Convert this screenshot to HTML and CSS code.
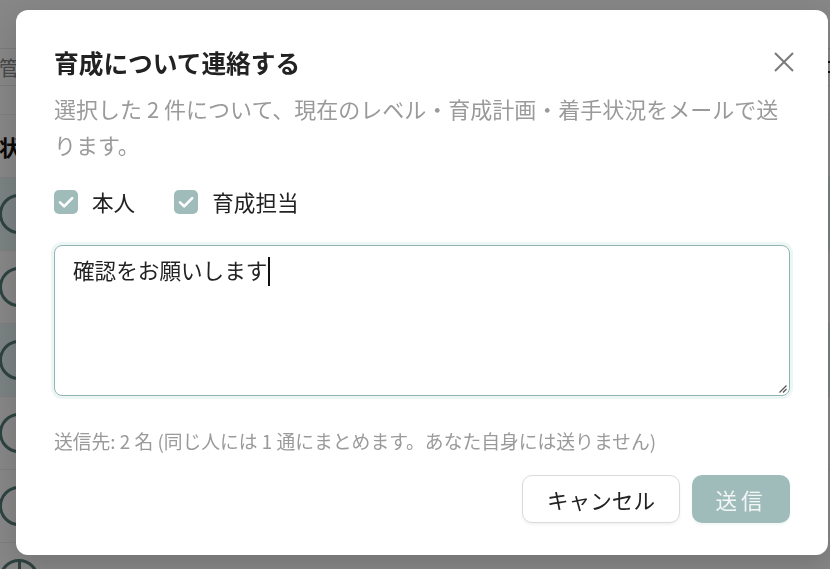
FILE: index.html
```html
<!DOCTYPE html>
<html lang="ja">
<head>
<meta charset="utf-8">
<title>育成について連絡する</title>
<link rel="stylesheet" href="styles.css">
</head>
<body>
<div class="page">
  <div class="toolbar">
    <span class="tool-text">管理</span>
    <span class="tool-right"></span>
  </div>
  <div class="thead"><span class="th">状態</span></div>
  <div class="row selected"><span class="circle"></span><span class="badge"></span></div>
  <div class="row"><span class="circle"></span><span class="badge"></span></div>
  <div class="row selected"><span class="circle"></span><span class="badge"></span></div>
  <div class="row"><span class="circle"></span><span class="badge"></span></div>
  <div class="row"><span class="circle"></span><span class="badge"></span></div>
  <div class="row"><span class="circle pie"></span><span class="badge"></span></div>
</div>

<div class="overlay"></div>

<div class="modal" role="dialog" aria-labelledby="dlg-title">
  <div class="modal-head">
    <h2 id="dlg-title" class="modal-title">育成について連絡する</h2>
    <button class="close" aria-label="閉じる">
      <svg width="20" height="20" viewBox="0 0 20 20"><path d="M1 1L19 19M19 1L1 19" stroke="#7a7a7a" stroke-width="2" fill="none"/></svg>
    </button>
  </div>
  <p class="desc">選択した 2 件について、現在のレベル・育成計画・着手状況をメールで送ります。</p>
  <div class="checks">
    <label class="check">
      <span class="box"><svg width="24" height="24" viewBox="0 0 24 24"><path d="M6 12.4L10.1 16.3L18.2 8.2" stroke="#fff" stroke-width="2.6" fill="none" stroke-linecap="round" stroke-linejoin="round"/></svg></span>
      <span class="check-label">本人</span>
    </label>
    <label class="check">
      <span class="box"><svg width="24" height="24" viewBox="0 0 24 24"><path d="M6 12.4L10.1 16.3L18.2 8.2" stroke="#fff" stroke-width="2.6" fill="none" stroke-linecap="round" stroke-linejoin="round"/></svg></span>
      <span class="check-label">育成担当</span>
    </label>
  </div>
  <div class="textarea" role="textbox" aria-multiline="true">確認をお願いします<span class="caret"></span>
    <svg class="grip" width="10" height="10" viewBox="0 0 10 10"><path d="M9.5 2.5L2.5 9.5M9.5 6L6 9.5" stroke="#555" stroke-width="1.2" fill="none"/></svg>
  </div>
  <p class="note">送信先: 2 名 (同じ人には 1 通にまとめます。あなた自身には送りません)</p>
  <div class="actions">
    <button class="btn cancel">キャンセル</button>
    <button class="btn send" disabled>送信</button>
  </div>
</div>
</body>
</html>
```

FILE: styles.css
```css
html, body {
  margin: 0;
  padding: 0;
  width: 830px;
  height: 569px;
  overflow: hidden;
  background: #ffffff;
  font-family: "Noto Sans CJK JP", "Noto Sans", sans-serif;
}

/* background page */
.page {
  position: relative;
  height: 569px;
  overflow: hidden;
}
.toolbar {
  margin-top: 48px;
  height: 36px;
  border-top: 1px solid #e6e6e6;
  border-bottom: 1px solid #e6e6e6;
  display: flex;
  align-items: center;
  justify-content: space-between;
  font-size: 20px;
  color: #888;
}
.tool-text {
  margin-left: -1px;
}
.tool-right {
  width: 8px;
  height: 12px;
  margin-right: -4px;
  border-top: 2px solid #222;
  border-bottom: 2px solid #222;
  box-sizing: border-box;
}
.thead {
  margin-top: 28px;
  height: 62px;
  border-top: 1px solid #f0f0f0;
  border-bottom: 1px solid #eeeeee;
  display: flex;
  align-items: center;
}
.th {
  font-size: 22px;
  font-weight: 700;
  color: #111;
  margin-left: -1px;
}
.row {
  height: 72px;
  border-bottom: 1px solid #eeeeee;
  display: flex;
  align-items: center;
}
.row.selected {
  background: #e8f7f5;
}
.circle {
  width: 34px;
  height: 34px;
  border: 3px solid #587f7c;
  border-radius: 50%;
  margin-left: -1px;
  flex: none;
}
.circle.pie {
  background: linear-gradient(90deg, transparent 16px, #587f7c 16px, #587f7c 19px, transparent 19px);
}
.badge {
  margin-left: 381px;
  margin-top: 50px;
  width: 96px;
  height: 30px;
  border: 1px solid #e39a9a;
  border-radius: 6px;
  background: #fdf0f0;
}

.overlay {
  position: fixed;
  inset: 0;
  background: rgba(0, 0, 0, 0.47);
}

/* modal */
.modal {
  position: absolute;
  left: 16px;
  top: 10px;
  width: 812px;
  box-sizing: border-box;
  padding: 38px 38px 32px;
  background: #ffffff;
  border-radius: 12px;
  box-shadow: 0 10px 30px rgba(0, 0, 0, 0.15);
}
.modal-head {
  display: flex;
  align-items: center;
  justify-content: space-between;
  height: 28px;
}
.modal-title {
  margin: 0;
  font-size: 24.7px;
  line-height: 28px;
  font-weight: 700;
  color: #222;
}
.close {
  border: 0;
  background: transparent;
  padding: 0;
  width: 20px;
  height: 20px;
  margin-right: -4px;
  display: flex;
}
.desc {
  margin: 14px 0 0;
  font-size: 22px;
  line-height: 36px;
  color: #9a9a9a;
}
.checks {
  margin-top: 28px;
  display: flex;
  gap: 39px;
  height: 24px;
}
.check {
  display: flex;
  align-items: center;
  gap: 14px;
}
.box {
  width: 24px;
  height: 24px;
  border-radius: 5px;
  background: #9fbcbb;
  display: flex;
}
.check-label {
  font-size: 21.6px;
  line-height: 24px;
  color: #222;
}
.textarea {
  position: relative;
  margin-top: 31px;
  height: 151px;
  box-sizing: border-box;
  border: 1px solid #8fb4b1;
  border-radius: 8px;
  box-shadow: 0 0 0 3px #eef6f5;
  padding: 9px 18px;
  font-size: 21.6px;
  line-height: 30px;
  color: #222;
}
.caret {
  display: inline-block;
  width: 2px;
  height: 29px;
  background: #111;
  vertical-align: -7px;
  margin-left: 1px;
}
.grip {
  position: absolute;
  right: 2px;
  bottom: 2px;
}
.note {
  margin: 33px 0 0;
  font-size: 18.8px;
  line-height: 24px;
  color: #9a9a9a;
}
.actions {
  margin-top: 22px;
  display: flex;
  justify-content: flex-end;
  gap: 12px;
}
.btn {
  height: 48px;
  border-radius: 10px;
  font-family: "Noto Sans CJK JP", "Noto Sans", sans-serif;
  font-size: 21.6px;
  display: flex;
  align-items: center;
  justify-content: center;
  box-sizing: border-box;
}
.cancel {
  width: 158px;
  background: #ffffff;
  border: 1px solid #dadada;
  color: #222;
  box-shadow: 0 2px 3px rgba(0, 0, 0, 0.05);
}
.send {
  width: 98px;
  background: #9fbcbb;
  border: 0;
  color: #f2f6f6;
  letter-spacing: 4px;
  padding-left: 6px;
  box-shadow: 0 2px 3px rgba(80, 140, 130, 0.08);
}
```
